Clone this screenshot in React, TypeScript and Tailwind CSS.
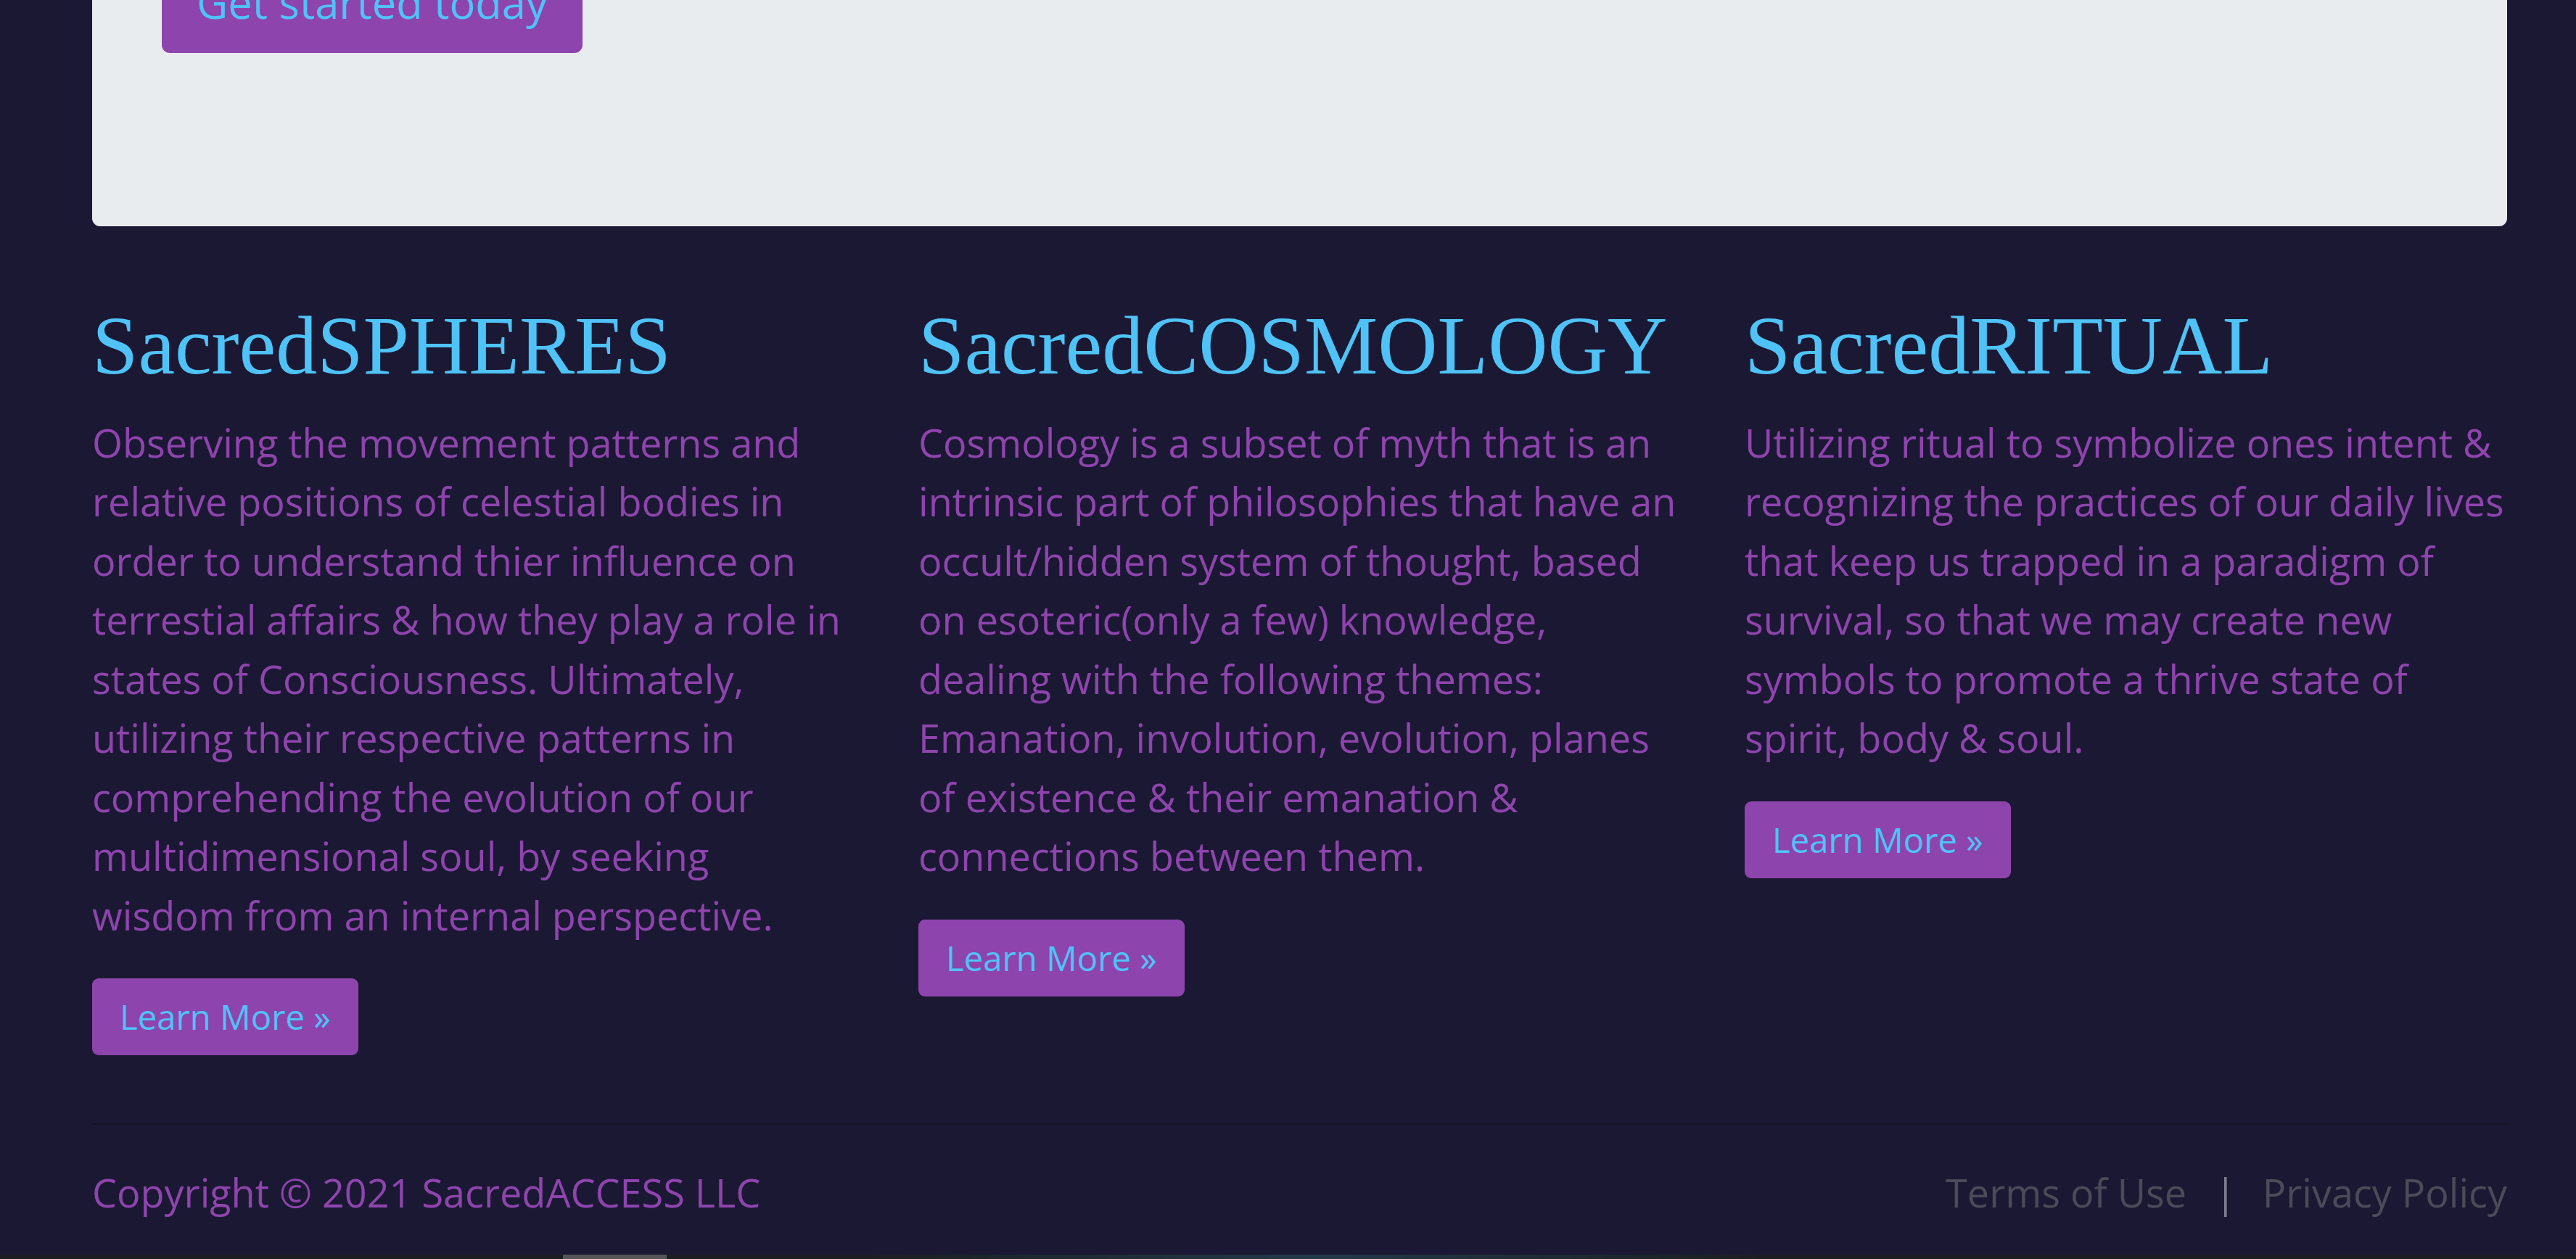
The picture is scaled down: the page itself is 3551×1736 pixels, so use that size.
import React from "react";

const cols = [
  {
    title: "SacredSPHERES",
    text: "Observing the movement patterns and relative positions of celestial bodies in order to understand thier influence on terrestial affairs & how they play a role in states of Consciousness. Ultimately, utilizing their respective patterns in comprehending the evolution of our multidimensional soul, by seeking wisdom from an internal perspective.",
  },
  {
    title: "SacredCOSMOLOGY",
    text: "Cosmology is a subset of myth that is an intrinsic part of philosophies that have an occult/hidden system of thought, based on esoteric(only a few) knowledge, dealing with the following themes: Emanation, involution, evolution, planes of existence & their emanation & connections between them.",
  },
  {
    title: "SacredRITUAL",
    text: "Utilizing ritual to symbolize ones intent & recognizing the practices of our daily lives that keep us trapped in a paradigm of survival, so that we may create new symbols to promote a thrive state of spirit, body & soul.",
  },
];

export default function App() {
  return (
    <div
      className="h-[1736px] w-[3551px] overflow-hidden bg-[#1b1833] flex flex-col"
      style={{ fontFamily: '"Open Sans", "Liberation Sans", sans-serif' }}
    >
      <div className="pl-[127px] pr-[95px] flex flex-col">
        {/* Jumbotron card */}
        <div className="bg-[#e9ecef] rounded-b-[11px] flex flex-col items-start pl-[96px] pb-[239px]">
          <a className="-mt-[68px] bg-[#8e44ad] text-[#4fc3f7] rounded-[11px] px-[48px] py-[25px] text-[59.6px] leading-[91px] whitespace-nowrap">
            Get started today
          </a>
        </div>

        {/* Three columns */}
        <div className="mt-[97px] grid grid-cols-3 gap-x-[88px] items-start">
          {cols.map((c) => (
            <div key={c.title} className="flex flex-col items-start">
              <h2
                className="text-[114px] leading-[136.8px] font-normal text-[#4fc3f7] whitespace-nowrap"
                style={{ fontFamily: '"Liberation Serif", "Times New Roman", serif' }}
              >
                {c.title}
              </h2>
              <p className="mt-[24px] text-[54px] leading-[81.5px] text-[#8e44ad]">{c.text}</p>
              <a className="mt-[46px] bg-[#8e44ad] text-[#4fc3f7] rounded-[9px] px-[38px] py-[17px] text-[47.3px] leading-[72px] whitespace-nowrap">
                Learn More »
              </a>
            </div>
          ))}
        </div>

        {/* Footer */}
        <div className="mt-[94px] h-[2px] bg-[#161429]" />
        <div className="mt-[53px] flex justify-between items-start text-[54px] leading-[81.5px]">
          <p className="text-[#8e44ad]">Copyright © 2021 SacredACCESS LLC</p>
          <p className="flex whitespace-nowrap">
            <a className="text-[#4a4b59]">Terms of Use</a>
            <span className="ml-[39px] mr-[36px] text-[#7e7c92]">|</span>
            <a className="text-[#4a4b59]">Privacy Policy</a>
          </p>
        </div>
      </div>

      {/* Bottom strip (next section peeking) */}
      <div className="mt-auto h-[6px] w-full bg-[#1b1e20] flex">
        <div className="ml-[776px] w-[143px] h-full bg-[#555557]" />
        <div className="ml-[270px] w-[1245px] h-full bg-gradient-to-r from-[#1b1e20] via-[#22394a] to-[#1b1e20]" />
      </div>
    </div>
  );
}
